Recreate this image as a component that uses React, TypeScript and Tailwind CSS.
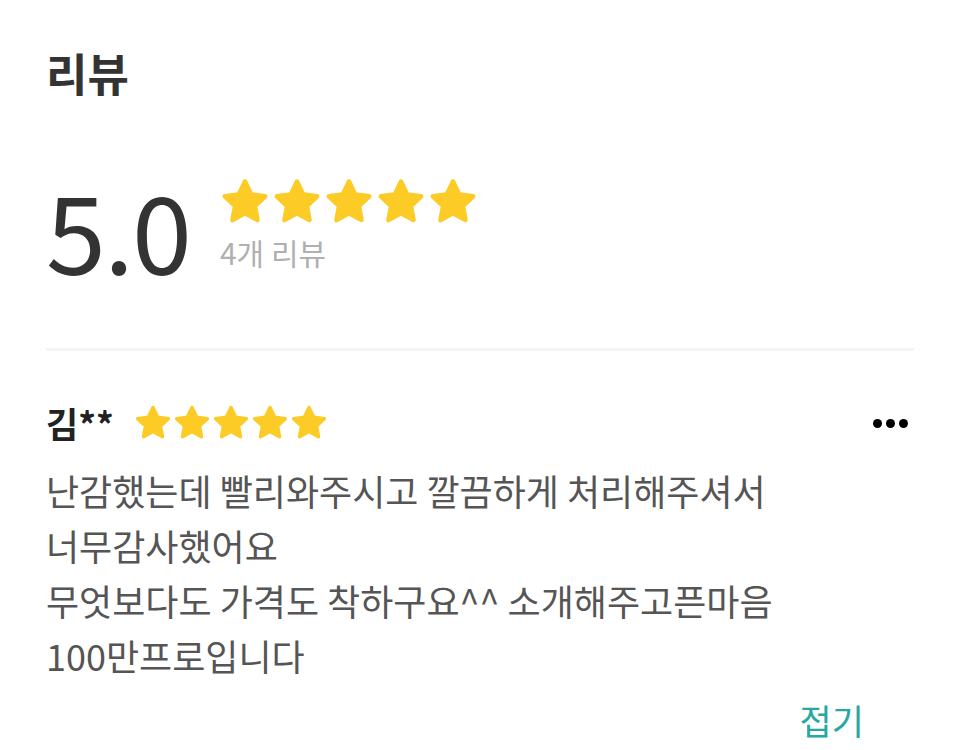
function Stars({ size, gap }: { size: number; gap: string }) {
  return (
    <div className={`flex ${gap}`}>
      {[0, 1, 2, 3, 4].map((i) => (
        <svg key={i} width={size} height={size} viewBox="0 0 24 24">
          <path
            d="M12 2.2l2.95 6.2 6.75.85-4.95 4.7 1.25 6.7L12 17.35l-6 3.3 1.25-6.7-4.95-4.7 6.75-.85z"
            fill="#fccb25"
            stroke="#fccb25"
            strokeWidth="2.2"
            strokeLinejoin="round"
          />
        </svg>
      ))}
    </div>
  )
}

export default function App() {
  return (
    <div
      className="w-[960px] h-[750px] bg-white overflow-hidden"
      style={{ fontFamily: '"Noto Sans CJK KR", "Noto Sans", sans-serif' }}
    >
      <div className="px-[46px] pt-[42px]">
        <h1 className="text-[45px] font-bold text-[#333] leading-[62px]">리뷰</h1>

        <div className="flex items-center mt-[70px] gap-[30px]">
          <div className="text-[108px] leading-none text-[#333] font-normal tracking-[-2px]">5.0</div>
          <div className="flex flex-col -mt-[6px]">
            <Stars size={50} gap="gap-[2px]" />
            <div className="text-[30px] text-[#b0b0b0] mt-[4px] leading-[42px]">4개 리뷰</div>
          </div>
        </div>

        <div className="h-[3px] bg-[#f4f4f4] mt-[66px]" />

        <div className="flex items-center justify-between mt-[50px]">
          <div className="flex items-center gap-[20px]">
            <span className="text-[35px] font-bold text-[#222] leading-[44px]">김**</span>
            <Stars size={38} gap="gap-[1px]" />
          </div>
          <div className="flex gap-[4px] mr-[6px]">
            <span className="w-[9px] h-[9px] rounded-full bg-black" />
            <span className="w-[9px] h-[9px] rounded-full bg-black" />
            <span className="w-[9px] h-[9px] rounded-full bg-black" />
          </div>
        </div>

        <p className="mt-[18px] text-[36px] leading-[55px] text-[#555]">
          난감했는데 빨리와주시고 깔끔하게 처리해주셔서
          <br />
          너무감사했어요
          <br />
          무엇보다도 가격도 착하구요^^ 소개해주고픈마음
          <br />
          100만프로입니다
        </p>

        <div className="flex justify-end mt-[12px] pr-[50px]">
          <span className="text-[35px] text-[#27a8a0] leading-[50px]">접기</span>
        </div>
      </div>
    </div>
  )
}
